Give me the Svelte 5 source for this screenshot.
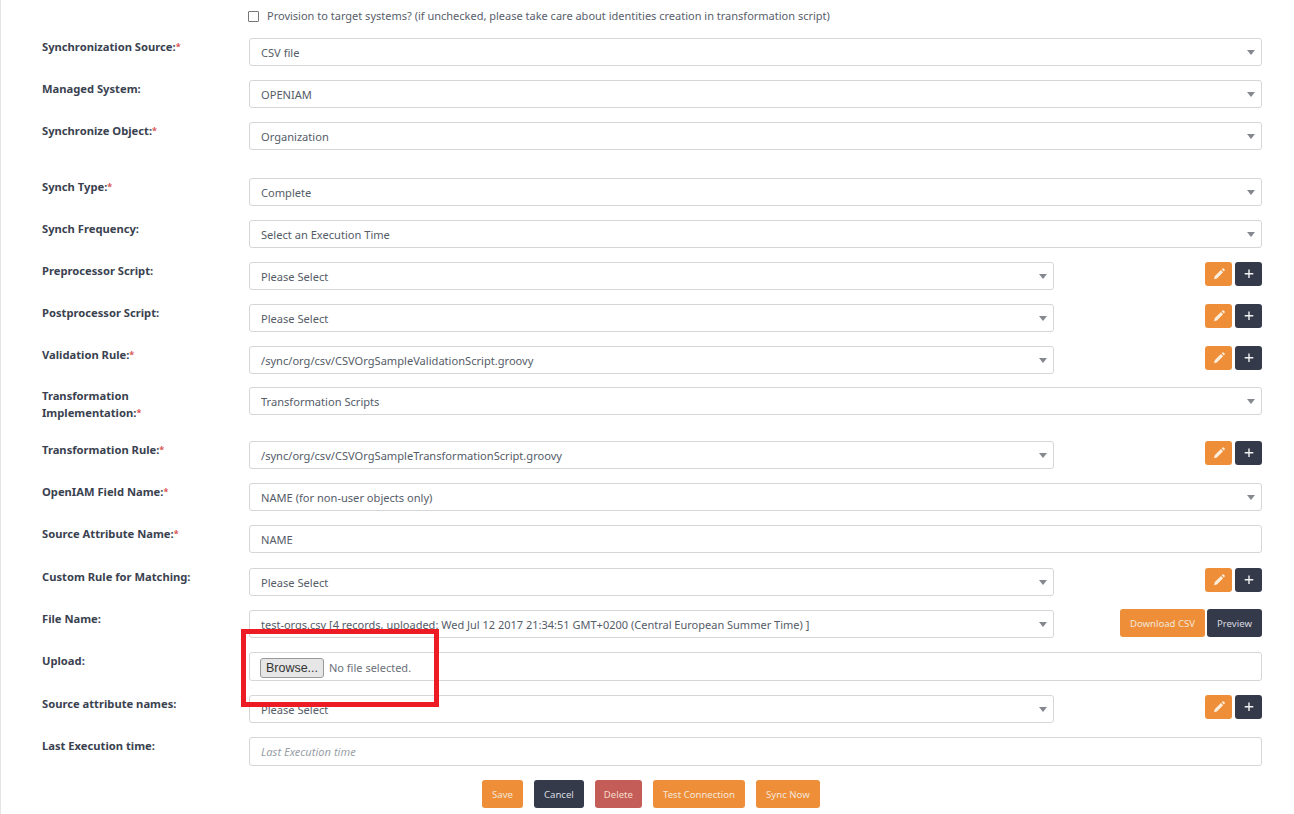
<script>
  const scriptSelects = { edit: true };
  const rows = [
    { label: 'Synchronization Source:', req: true, value: 'CSV file' },
    { label: 'Managed System:', value: 'OPENIAM' },
    { label: 'Synchronize Object:', req: true, value: 'Organization', cls: 'gap' },
    { label: 'Synch Type:', req: true, value: 'Complete' },
    { label: 'Synch Frequency:', value: 'Select an Execution Time' },
    { label: 'Preprocessor Script:', value: 'Please Select', ...scriptSelects },
    { label: 'Postprocessor Script:', value: 'Please Select', ...scriptSelects },
    { label: 'Validation Rule:', req: true, value: '/sync/org/csv/CSVOrgSampleValidationScript.groovy', cls: 'tight', ...scriptSelects },
    { label: 'Transformation Implementation:', req: true, value: 'Transformation Scripts', cls: 'tall' },
    { label: 'Transformation Rule:', req: true, value: '/sync/org/csv/CSVOrgSampleTransformationScript.groovy', ...scriptSelects },
    { label: 'OpenIAM Field Name:', req: true, value: 'NAME (for non-user objects only)' },
    { label: 'Source Attribute Name:', req: true, input: 'NAME', cls: 'loose' },
    { label: 'Custom Rule for Matching:', value: 'Please Select', ...scriptSelects },
    { label: 'File Name:', value: 'test-orgs.csv [4 records, uploaded: Wed Jul 12 2017 21:34:51 GMT+0200 (Central European Summer Time) ]', csv: true },
    { label: 'Upload:', file: true },
    { label: 'Source attribute names:', value: 'Please Select', ...scriptSelects },
    { label: 'Last Execution time:', placeholder: 'Last Execution time' }
  ];
</script>

<div class="page">
  <label class="provision">
    <input type="checkbox" />
    <span>Provision to target systems? (if unchecked, please take care about identities creation in transformation script)</span>
  </label>

  <form class="sync-form" onsubmit={(e) => e.preventDefault()}>
    {#each rows as r}
      <div class="row {r.cls ?? ''}">
        <div class="lbl">{r.label}{#if r.req}<span class="req">*</span>{/if}</div>

        <div class="field">
          {#if r.file}
            <div class="file-box">
              <button type="button" class="browse">Browse...</button>
              <span>No file selected.</span>
            </div>
          {:else if r.input}
            <input class="ctl" type="text" value={r.input} />
          {:else if r.placeholder}
            <input class="ctl last" type="text" placeholder={r.placeholder} />
          {:else}
            <div class="sel" class:short={r.edit || r.csv} class:file-sel={r.csv}>
              <select class="ctl">
                <option>{r.value}</option>
              </select>
            </div>
          {/if}

          {#if r.edit}
            <div class="acts">
              <button type="button" class="btn orange icon" aria-label="Edit">
                <svg width="14" height="14" viewBox="0 0 14 14"><path d="M2 12.200l.7-3L8.900 3l2.200 2.200-6.200 6.200zM9.700 2.200l.8-.8a.7.7 0 0 1 1 0l1.200 1.200a.7.7 0 0 1 0 1l-.8.8z" fill="#fbeedd" /></svg>
              </button>
              <button type="button" class="btn dark icon" aria-label="Add">
                <svg width="12" height="12" viewBox="0 0 12 12"><path d="M6 1.500v8.500M1.700 5.700h8.600" stroke="#f2f3f5" stroke-width="1.400" fill="none" /></svg>
              </button>
            </div>
          {:else if r.csv}
            <div class="acts csv-acts">
              <button type="button" class="btn orange csv">Download CSV</button>
              <button type="button" class="btn dark preview">Preview</button>
            </div>
          {/if}
        </div>
      </div>
    {/each}

    <div class="footer">
      <button type="button" class="btn orange">Save</button>
      <button type="button" class="btn dark">Cancel</button>
      <button type="button" class="btn red">Delete</button>
      <button type="button" class="btn orange">Test Connection</button>
      <button type="button" class="btn orange">Sync Now</button>
    </div>
  </form>

  <div class="highlight"></div>
</div>

<style>
  :global(body) {
    margin: 0;
    background: #fff;
    font-family: 'Noto Sans', 'Liberation Sans', sans-serif;
    overflow: hidden;
  }

  .page {
    position: relative;
    box-sizing: border-box;
    height: 814px;
    padding: 7px 32px 0 41px;
    border-left: 1px solid #e4e4e4;
    color: #4a5260;
  }

  .provision {
    display: flex;
    align-items: center;
    gap: 8px;
    margin-left: 206px;
    height: 16px;
    font-size: 11px;
    color: #59606c;
  }

  .provision input {
    appearance: none;
    width: 11px;
    height: 11px;
    margin: 3px 0 0;
    border: 1px solid #777;
    border-radius: 1px;
    background: #fff;
  }

  .sync-form {
    margin-top: 15px;
  }

  .row {
    display: grid;
    grid-template-columns: 207px 1fr;
    min-height: 28px;
    margin-bottom: 14px;
  }

  .row.gap { margin-bottom: 28px; }
  .row.tight { margin-bottom: 13px; }
  .row.loose { margin-bottom: 15px; }
  .row.tall { height: 28px; margin-bottom: 26px; }

  .lbl {
    max-width: 165px;
    font-size: 11.200px;
    font-weight: 700;
    line-height: 17px;
    color: #3a4250;
  }

  .req {
    font-size: 9px;
    vertical-align: 1px;
    color: #d9534f;
  }

  .field {
    display: flex;
    justify-content: space-between;
    align-items: flex-start;
  }

  .ctl {
    box-sizing: border-box;
    width: 100%;
    height: 28px;
    padding: 0 11px;
    appearance: none;
    border: 1px solid #d6d6d6;
    border-radius: 3px;
    background: #fff;
    font: 11.100px 'Noto Sans', sans-serif;
    color: #555c68;
    outline: none;
  }

  .ctl.last { height: 29px; }

  .ctl::placeholder {
    font-style: italic;
    color: #9a9fa6;
  }

  .sel {
    position: relative;
    flex: 1;
  }

  .sel.short {
    flex: 0 0 805px;
  }

  .file-sel .ctl {
    font-size: 11px;
  }

  .sel::after {
    content: '';
    position: absolute;
    right: 7px;
    top: 12px;
    border: 4px solid transparent;
    border-top: 5px solid #85888e;
    border-bottom: 0;
  }

  .file-box {
    display: flex;
    align-items: center;
    gap: 5px;
    box-sizing: border-box;
    width: 100%;
    height: 29px;
    padding: 2px 10px 0;
    border: 1px solid #d6d6d6;
    border-radius: 3px;
    font-size: 11px;
    color: #6b7079;
  }

  .browse {
    width: 64px;
    height: 20px;
    padding: 0;
    border: 1px solid #9a9a9a;
    border-radius: 3px;
    background: #e6e6e6;
    font: 12.500px 'Liberation Sans', sans-serif;
    color: #333;
  }

  .acts {
    display: flex;
    gap: 3px;
  }

  .csv-acts {
    margin-top: -1px;
    gap: 2px;
  }

  .btn {
    height: 28px;
    padding: 0 10px;
    border: 0;
    border-radius: 3px;
    font: 9.600px 'Noto Sans', sans-serif;
    color: #f3e6d8;
  }

  .btn.icon {
    display: flex;
    align-items: center;
    justify-content: center;
    width: 27px;
    height: 24px;
    padding: 0;
  }

  .orange { background: #ef8e39; }
  .dark { background: #343a49; color: #d9dbe0; }
  .red { background: #c45c58; color: #f3dcc8; padding: 0 9px; }

  .csv { width: 85px; padding: 0; }
  .preview { width: 55px; padding: 0; }

  .footer {
    display: flex;
    gap: 11px;
    margin-left: 440px;
  }

  .highlight {
    position: absolute;
    left: 240px;
    top: 629px;
    width: 188px;
    height: 68px;
    border: 5px solid #ed1c24;
    pointer-events: none;
  }
</style>
